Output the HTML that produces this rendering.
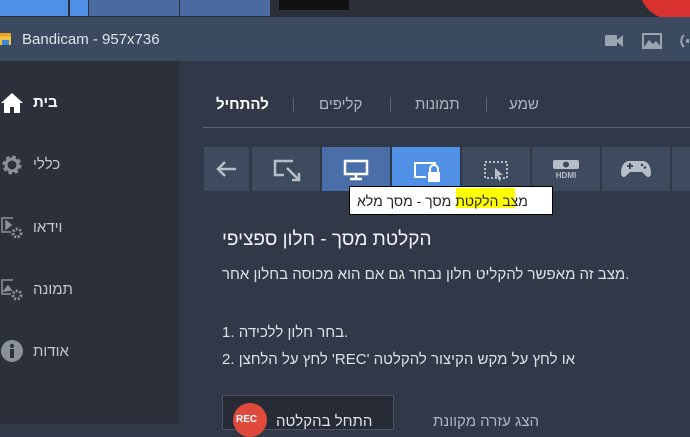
<!DOCTYPE html>
<html><head><meta charset="utf-8"><style>
*{margin:0;padding:0;box-sizing:border-box}
body{width:690px;height:424px;overflow:hidden;background:#313949;font-family:"Liberation Sans","Noto Sans CJK SC",sans-serif;position:relative;color:#e6e8ec}
.a{position:absolute}
.t{white-space:nowrap;direction:rtl}
.l{white-space:nowrap;direction:ltr}
.btn{position:absolute;top:147px;height:44px;background:#3e4a5e}
</style></head><body>
<div class="a" style="left:0;top:0;width:690px;height:17px;background:#2a2f38"></div>
<div class="a" style="left:0;top:0;width:68px;height:16px;background:#4f8fe6"></div>
<div class="a" style="left:70px;top:0;width:18px;height:16px;background:#4f8fe6"></div>
<div class="a" style="left:89px;top:0;width:90px;height:16px;background:#4a6aa0"></div>
<div class="a" style="left:180px;top:0;width:90px;height:16px;background:#4a6aa0"></div>
<div class="a" style="left:279px;top:0;width:70px;height:10px;background:#111"></div>
<div class="a" style="left:640px;top:-40px;width:70px;height:60px;border-radius:50%;background:#d93030"></div>
<div class="a" style="left:0;top:17px;width:690px;height:44px;background:#3c4a60"></div>
<div class="a" style="left:0;top:33px;width:11px;height:12px;background:#f0c040;border-top:3px solid #e8a020"></div>
<div class="a" style="left:2px;top:40px;width:7px;height:5px;background:#3a8ad8"></div>
<div class="a" style="left:22px;top:31px;font-size:15px;color:#e0e4ea">Bandicam - 957x736</div>
<svg class="a" style="left:604px;top:32px" width="85" height="18" viewBox="0 0 85 18" fill="#9aa3b0"><rect x="1" y="3" width="12" height="11" rx="1"/><path d="M13 8l6-5v12l-6-5z"/><rect x="39" y="2" width="18" height="14" fill="none" stroke="#9aa3b0" stroke-width="2"/><path d="M40 15l5-7 4 4 3-3 5 6z"/><path d="M80 3a8 8 0 0 0 0 12" fill="none" stroke="#9aa3b0" stroke-width="2"/><circle cx="84" cy="9" r="2"/></svg>
<div class="a" style="left:0;top:61px;width:179px;height:363px;background:#2b303b"></div>
<svg class="a" style="left:1px;top:92px" width="22" height="22" viewBox="0 0 22 22" fill="#fff"><path d="M11 1L0 11h3v10h6v-6h4v6h6V11h3z"/></svg>
<div class="a t" style="left:33px;top:94px;font-size:15px;font-weight:bold;color:#fff">בית</div>
<svg class="a" style="left:1px;top:154px" width="22" height="22" viewBox="0 0 22 22"><circle cx="11" cy="11" r="7" fill="none" stroke="#8a919c" stroke-width="5" stroke-dasharray="3 2.5"/><circle cx="11" cy="11" r="6" fill="none" stroke="#8a919c" stroke-width="3"/></svg>
<div class="a t" style="left:33px;top:156px;font-size:15px;color:#c4c8ce">כללי</div>
<svg class="a" style="left:1px;top:216px" width="24" height="24" viewBox="0 0 24 24" fill="none" stroke="#8a919c" stroke-width="1.5"><path d="M12 2H1v14h9"/><path d="M5 5l5 4-5 4z" fill="#8a919c"/><circle cx="16" cy="17" r="4" stroke-width="3" stroke-dasharray="2 1.5"/></svg>
<div class="a t" style="left:33px;top:219px;font-size:15px;color:#c4c8ce">וידאו</div>
<svg class="a" style="left:1px;top:278px" width="24" height="24" viewBox="0 0 24 24" fill="none" stroke="#8a919c" stroke-width="1.5"><path d="M12 2H1v14h9"/><path d="M3 13l4-5 3 4z" fill="#8a919c"/><circle cx="16" cy="17" r="4" stroke-width="3" stroke-dasharray="2 1.5"/></svg>
<div class="a t" style="left:33px;top:281px;font-size:15px;color:#c4c8ce">תמונה</div>
<svg class="a" style="left:1px;top:340px" width="22" height="22" viewBox="0 0 22 22"><circle cx="11" cy="11" r="11" fill="#8a919c"/><rect x="9" y="9" width="4" height="9" fill="#2b303b"/><circle cx="11" cy="6" r="2" fill="#2b303b"/></svg>
<div class="a t" style="left:33px;top:343px;font-size:15px;color:#c4c8ce">אודות</div>
<div class="a t" style="left:216px;top:96px;font-size:15px;font-weight:bold;color:#fff">להתחיל</div>
<div class="a" style="left:293px;top:97px;width:1px;height:15px;background:#5a6272"></div>
<div class="a t" style="left:319px;top:96px;font-size:15px;color:#b0b6c0">קליפים</div>
<div class="a" style="left:390px;top:97px;width:1px;height:15px;background:#5a6272"></div>
<div class="a t" style="left:415px;top:96px;font-size:15px;color:#b0b6c0">תמונות</div>
<div class="a" style="left:486px;top:97px;width:1px;height:15px;background:#5a6272"></div>
<div class="a t" style="left:509px;top:96px;font-size:15px;color:#b0b6c0">שמע</div>
<div class="a" style="left:203px;top:127px;width:487px;height:1px;background:#5a6272"></div>
<div class="btn" style="left:204px;width:45px"></div>
<svg class="a" style="left:215px;top:160px" width="22" height="18" viewBox="0 0 22 18" fill="none" stroke="#b8bec8" stroke-width="2.5"><path d="M21 9H3M10 2L3 9l7 7"/></svg>
<div class="btn" style="left:252px;width:68px"></div>
<svg class="a" style="left:273px;top:159px" width="30" height="24" viewBox="0 0 30 24" fill="none" stroke="#b8bec8" stroke-width="2.5"><path d="M20 2H2v14h9"/><path d="M14 9l12 12M26 14v7h-7"/></svg>
<div class="btn" style="left:322px;width:68px;background:#4a6fa8"></div>
<svg class="a" style="left:343px;top:159px" width="26" height="22" viewBox="0 0 26 22" fill="none" stroke="#fff" stroke-width="2.5"><rect x="2" y="2" width="22" height="13"/><path d="M13 15v4M7 20h12"/></svg>
<div class="btn" style="left:392px;width:68px;background:#5091e6"></div>
<svg class="a" style="left:412px;top:160px" width="30" height="24" viewBox="0 0 30 24" fill="#fff"><path d="M2 2h22v4h-2V4H4v12h10v2H2z"/><rect x="16" y="12" width="12" height="10" rx="1"/><path d="M18 12v-3a4 4 0 0 1 8 0v3" fill="none" stroke="#fff" stroke-width="2"/></svg>
<div class="btn" style="left:462px;width:68px"></div>
<svg class="a" style="left:483px;top:160px" width="26" height="24" viewBox="0 0 26 24" fill="none" stroke="#b8bec8" stroke-width="2" stroke-dasharray="2 2"><rect x="2" y="2" width="22" height="16"/><path d="M12 8l8 7-4 0 2 5-2 1-2-5-2 3z" fill="#b8bec8" stroke="none"/></svg>
<div class="btn" style="left:532px;width:68px"></div>
<svg class="a" style="left:552px;top:159px" width="28" height="20" viewBox="0 0 28 20" fill="#b8bec8"><rect x="1" y="1" width="26" height="9" rx="2"/><circle cx="14" cy="5.5" r="3" fill="#3e4a5e"/><text x="14" y="19" font-size="8" font-family="Liberation Sans" text-anchor="middle" fill="#b8bec8" font-weight="bold">HDMI</text></svg>
<div class="btn" style="left:602px;width:68px"></div>
<svg class="a" style="left:621px;top:159px" width="30" height="20" viewBox="0 0 30 20" fill="#b8bec8"><path d="M8 2h14c5 0 8 6 8 12 0 4-3 5-5 3l-4-4H9l-4 4c-2 2-5 1-5-3C0 8 3 2 8 2z"/><rect x="6" y="6" width="6" height="2" fill="#3e4a5e"/><rect x="8" y="4" width="2" height="6" fill="#3e4a5e"/><circle cx="21" cy="6" r="1.3" fill="#3e4a5e"/><circle cx="24" cy="8.5" r="1.3" fill="#3e4a5e"/></svg>
<div class="btn" style="left:672px;width:18px"></div>
<div class="a" style="left:349px;top:186px;width:204px;height:29px;background:#fff;border:1px solid #000"></div>
<div class="a" style="left:456px;top:188px;width:59px;height:20px;background:#ffff00"></div>
<div class="a t" style="left:357px;top:193px;font-size:14px;color:#222">מצב הלקטת מסך - מסך מלא</div>
<div class="a l" style="left:222px;top:229px;font-size:19px;color:#f0f2f4">הקלטת מסך - חלון ספציפי</div>
<div class="a l" style="left:222px;top:266px;font-size:15px;color:#dde0e5">מצב זה מאפשר להקליט חלון נבחר גם אם הוא מכוסה בחלון אחר.</div>
<div class="a l" style="left:222px;top:324px;font-size:15px;color:#dde0e5">1. בחר חלון ללכידה.</div>
<div class="a l" style="left:222px;top:351px;font-size:15px;color:#dde0e5">2. לחץ על הלחצן 'REC' או לחץ על מקש הקיצור להקלטה</div>
<div class="a" style="left:222px;top:395px;width:172px;height:35px;background:#262b35;border:1px solid #4a5262"></div>
<div class="a" style="left:233px;top:403px;width:34px;height:34px;border-radius:50%;background:#e04a3c"></div>
<div class="a" style="left:236px;top:414px;font-size:10px;font-weight:bold;color:#fff">REC</div>
<div class="a t" style="left:276px;top:413px;font-size:15px;color:#e0e3e8">התחל בהקלטה</div>
<div class="a t" style="left:433px;top:413px;font-size:15px;color:#b0b6c0">הצג עזרה מקוונת</div>
</body></html>
